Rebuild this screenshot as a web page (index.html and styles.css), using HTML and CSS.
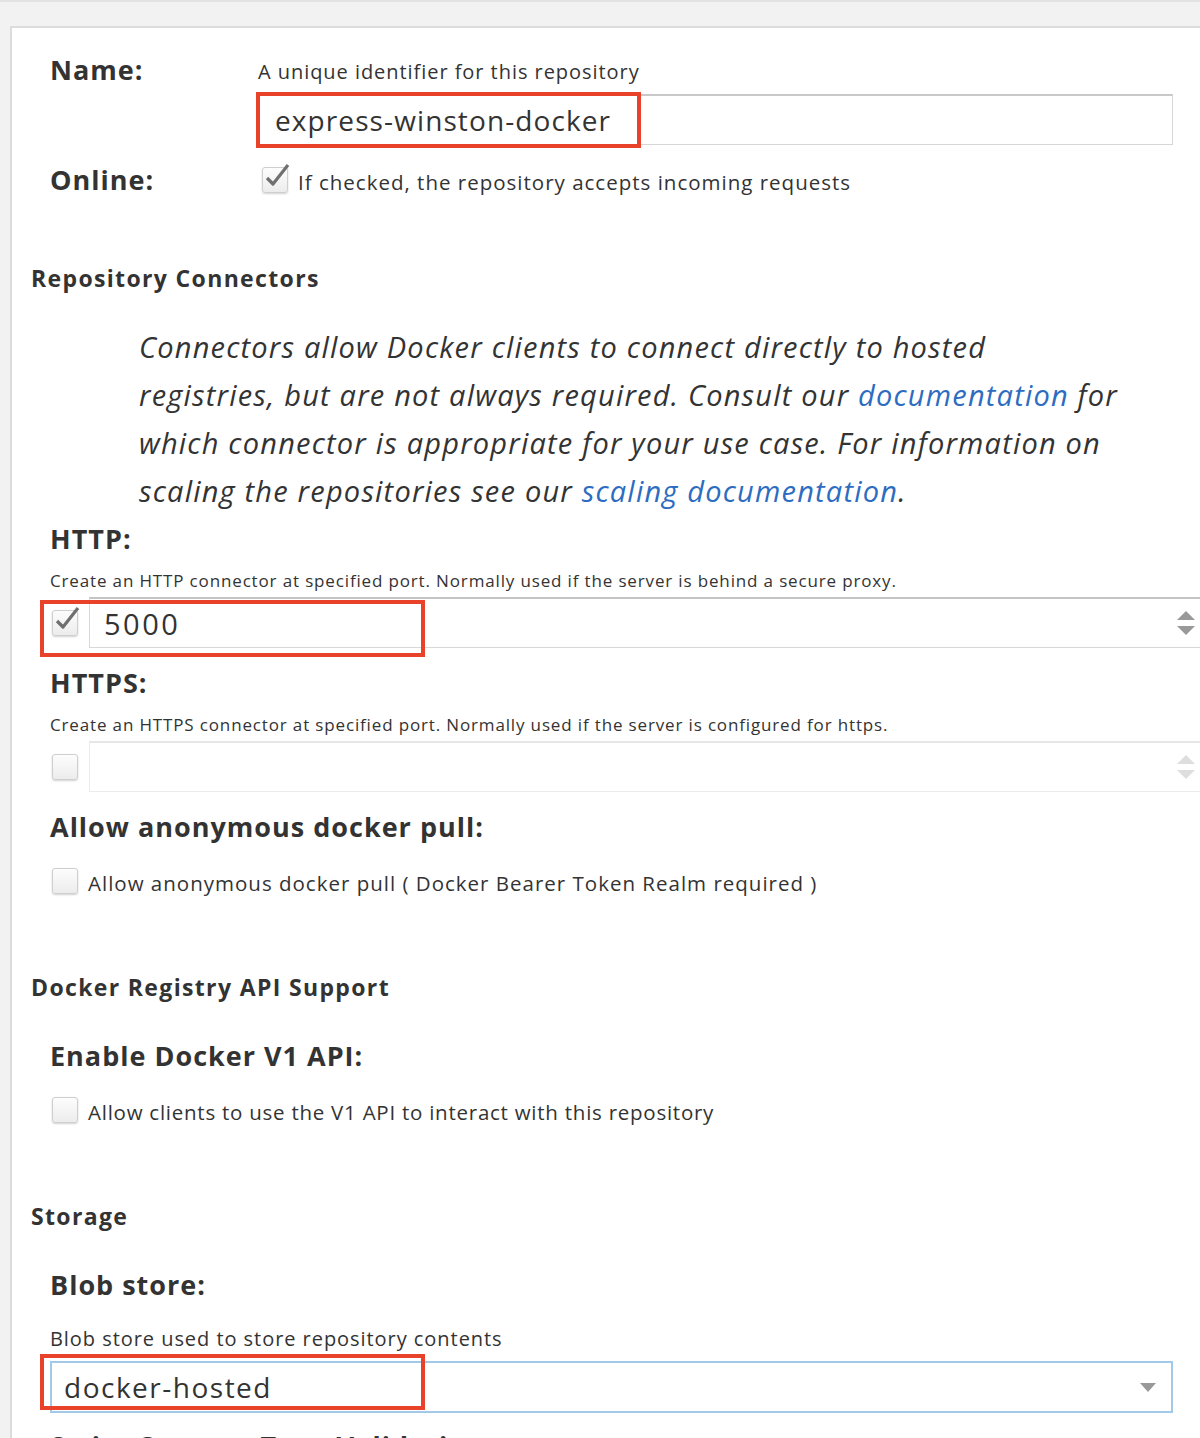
FILE: index.html
```html
<!DOCTYPE html>
<html>
<head>
<meta charset="utf-8">
<link rel="stylesheet" href="styles.css">
</head>
<body>
<div class="topline"></div>
<div class="panel">
  <div class="field-grid name-row">
    <div class="label">Name:</div>
    <div class="control">
      <div class="help">A unique identifier for this repository</div>
      <div class="input-wrap">
        <div class="text-input">express-winston-docker</div>
        <div class="mark mark-name"></div>
      </div>
    </div>
  </div>
  <div class="field-grid online-row">
    <div class="label">Online:</div>
    <div class="check-line">
      <span class="cb checked"><svg viewBox="0 0 30 30" width="30" height="30"><path d="M5 15 L11 21 L26 2" fill="none" stroke="#707070" stroke-width="3.2" stroke-linejoin="round"/></svg></span>
      <span class="check-text">If checked, the repository accepts incoming requests</span>
    </div>
  </div>

  <h3 class="section">Repository Connectors</h3>
  <p class="intro"><em>Connectors allow Docker clients to connect directly to hosted<br>registries, but are not always required. Consult our <a href="#">documentation</a> for<br>which connector is appropriate for your use case. For information on<br>scaling the repositories see our <a href="#">scaling documentation</a>.</em></p>

  <div class="sub">
    <div class="label http-label">HTTP:</div>
    <div class="small-help">Create an HTTP connector at specified port. Normally used if the server is behind a secure proxy.</div>
    <div class="port-row">
      <span class="cb checked"><svg viewBox="0 0 30 30" width="30" height="30"><path d="M5 15 L11 21 L26 2" fill="none" stroke="#707070" stroke-width="3.2" stroke-linejoin="round"/></svg></span>
      <div class="port-input">
        <span class="port-value">5000</span>
        <span class="spinner"><i class="up"></i><i class="down"></i></span>
      </div>
      <div class="mark mark-port"></div>
    </div>

    <div class="label https-label">HTTPS:</div>
    <div class="small-help">Create an HTTPS connector at specified port. Normally used if the server is configured for https.</div>
    <div class="port-row">
      <span class="cb"></span>
      <div class="port-input disabled">
        <span></span>
        <span class="spinner"><i class="up"></i><i class="down"></i></span>
      </div>
    </div>

    <div class="label anon-label">Allow anonymous docker pull:</div>
    <div class="check-line opt">
      <span class="cb"></span>
      <span class="check-text">Allow anonymous docker pull ( Docker Bearer Token Realm required )</span>
    </div>
  </div>

  <h3 class="section api-section">Docker Registry API Support</h3>
  <div class="sub">
    <div class="label v1-label">Enable Docker V1 API:</div>
    <div class="check-line opt">
      <span class="cb"></span>
      <span class="check-text v1-text">Allow clients to use the V1 API to interact with this repository</span>
    </div>
  </div>

  <h3 class="section api-section">Storage</h3>
  <div class="sub">
    <div class="label v1-label">Blob store:</div>
    <div class="help blob-help">Blob store used to store repository contents</div>
    <div class="select-wrap">
      <div class="select">
        <span>docker-hosted</span>
        <i class="caret"></i>
      </div>
      <div class="mark mark-blob"></div>
    </div>
    <div class="label strict-label">Strict Content Type Validation:</div>
  </div>
</div>
</body>
</html>
```

FILE: styles.css
```css
html, body {
  margin: 0;
  padding: 0;
}
body {
  background: #f2f2f2;
  font-family: "Open Sans", Lato, sans-serif;
  color: #333;
  width: 1200px;
  height: 1438px;
  overflow: hidden;
}
.topline {
  height: 2px;
  background: #e2e2e2;
}
.panel {
  margin: 24px 0 0 10px;
  background: #fff;
  border-top: 2px solid #dcdcdc;
  border-left: 2px solid #dcdcdc;
  padding: 25px 0 40px 19px;
}
.label {
  font-weight: 700;
  font-size: 27px;
  line-height: 34px;
  letter-spacing: 1px;
  color: #333;
}
.field-grid {
  display: grid;
  grid-template-columns: 208px 1fr;
  padding-left: 19px;
  padding-right: 27px;
}
.name-row .control {
  padding-top: 6px;
}
.help {
  font-size: 20px;
  line-height: 26px;
  letter-spacing: 0.95px;
}
.input-wrap {
  position: relative;
  margin-top: 9px;
}
.text-input {
  height: 48px;
  border: 1px solid #d6d6d6;
  border-top: 2px solid #c8c8c8;
  font-size: 28px;
  line-height: 48px;
  letter-spacing: 1.1px;
  padding-left: 16px;
}
.mark {
  position: absolute;
  border: 4px solid #e8432a;
  box-sizing: border-box;
  pointer-events: none;
}
.mark-name {
  left: -2px;
  top: -2px;
  width: 385px;
  height: 56px;
}
.online-row {
  margin-top: 18px;
}
.check-line {
  display: flex;
  align-items: center;
  height: 34px;
}
.online-row .check-line {
  padding-left: 4px;
}
.cb {
  position: relative;
  flex: none;
  width: 24px;
  height: 24px;
  border: 1px solid #cfcfcf;
  border-radius: 3px;
  background: linear-gradient(#fdfdfd, #ececec);
  box-shadow: 0 1px 2px rgba(0, 0, 0, 0.18);
}
.cb svg {
  position: absolute;
  left: -1px;
  top: -5px;
}
.check-text {
  font-size: 20.5px;
  line-height: 26px;
  letter-spacing: 1px;
  margin-left: 10px;
  padding-top: 4px;
}
.check-text.v1-text {
  letter-spacing: 0.75px;
}
.section {
  margin: 66px 0 0 0;
  font-size: 23px;
  line-height: 30px;
  letter-spacing: 1.35px;
  font-weight: 700;
}
.intro {
  margin: 30px 0 0 108px;
  font-size: 29px;
  line-height: 48px;
  letter-spacing: 1.2px;
  color: #333;
}
.intro a {
  color: #2d6cc0;
  text-decoration: none;
}
.sub {
  padding-left: 19px;
}
.http-label {
  margin-top: 7px;
}
.small-help {
  margin-top: 13px;
  font-size: 17px;
  line-height: 24px;
  letter-spacing: 0.85px;
}
.port-row {
  position: relative;
  margin-top: 4px;
  display: flex;
  align-items: center;
}
.port-row .cb {
  margin-left: 2px;
}
.port-input {
  margin-left: 11px;
  width: 1130px;
  height: 48px;
  border: 1px solid #d8d8d8;
  border-top: 2px solid #c4c4c4;
  border-right: none;
  display: flex;
  align-items: center;
  justify-content: space-between;
  padding-left: 14px;
  font-size: 29px;
  box-sizing: content-box;
}
.port-value {
  letter-spacing: 2.5px;
}
.port-input.disabled {
  border-color: #ececec;
  border-top: 2px solid #e6e6e6;
}
.spinner {
  display: flex;
  flex-direction: column;
  gap: 6px;
  margin-right: 5px;
}
.spinner i {
  display: block;
  width: 0;
  height: 0;
  border-left: 9px solid transparent;
  border-right: 9px solid transparent;
}
.spinner .up {
  border-bottom: 9px solid #999;
}
.spinner .down {
  border-top: 9px solid #999;
}
.disabled .spinner .up {
  border-bottom-color: #dedede;
}
.disabled .spinner .down {
  border-top-color: #dedede;
}
.mark-port {
  left: -10px;
  top: 3px;
  width: 385px;
  height: 57px;
}
.https-label {
  margin-top: 18px;
}
.anon-label {
  margin-top: 18px;
}
.check-line.opt {
  margin-top: 20px;
  height: 34px;
  padding-left: 2px;
}
.api-section {
  margin-top: 74px;
}
.v1-label {
  margin-top: 37px;
}
.blob-help {
  margin-top: 24px;
}
.select-wrap {
  position: relative;
  margin-top: 9px;
  margin-right: 27px;
}
.select {
  height: 48px;
  border: 2px solid #a3c9e8;
  display: flex;
  align-items: center;
  justify-content: space-between;
  padding-left: 12px;
  font-size: 28px;
  letter-spacing: 1.5px;
}
.caret {
  width: 0;
  height: 0;
  border-left: 8px solid transparent;
  border-right: 8px solid transparent;
  border-top: 9px solid #999;
  margin-right: 15px;
}
.mark-blob {
  left: -10px;
  top: -7px;
  width: 385px;
  height: 56px;
}
.strict-label {
  margin-top: 16px;
}
```
